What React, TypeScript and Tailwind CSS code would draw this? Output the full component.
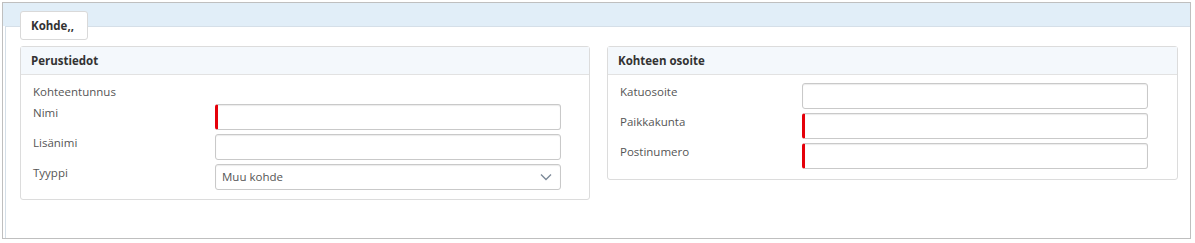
import React from 'react';

const font = { fontFamily: '"Open Sans", "Liberation Sans", sans-serif' };

const inputBase =
  'h-[26px] w-[346px] rounded-[3px] border border-[#c9c9c9] bg-white shadow-[inset_0_1px_1px_rgba(0,0,0,0.08)]';

const Field: React.FC<{ required?: boolean }> = ({ required }) => (
  <div className={`${inputBase} ${required ? 'border-l-[3px] border-l-[#e5000a]' : ''}`} />
);

const SelectField: React.FC<{ value: string }> = ({ value }) => (
  <div className={`${inputBase} flex items-center justify-between pl-[6px] pr-[8px]`}>
    <span className="text-[11.5px] text-[#555]">{value}</span>
    <svg width="12" height="8" viewBox="0 0 12 8" fill="none">
      <path d="M1 1.5L6 6.5L11 1.5" stroke="#7d8a99" strokeWidth="1.4" />
    </svg>
  </div>
);

const Row: React.FC<{ label: string; children: React.ReactNode }> = ({ label, children }) => (
  <div className="flex items-start">
    <div className="w-[182px] pt-[1px] text-[11.5px] leading-[16px] text-[#555]">{label}</div>
    {children}
  </div>
);

const Panel: React.FC<{ title: string; width: string; children: React.ReactNode }> = ({
  title,
  width,
  children,
}) => (
  <div className={`${width} rounded-[3px] border border-[#dcdcdc] bg-white`}>
    <div className="flex h-[28px] items-center border-b border-[#e2e2e2] bg-[#f4f8fc] px-[10px] text-[11.5px] font-bold text-[#333]">
      {title}
    </div>
    {children}
  </div>
);

export default function App() {
  return (
    <div className="h-[243px] w-[1195px] bg-white pl-[2px] pt-[2px]" style={font}>
      <div className="flex h-[237px] w-[1189px] flex-col border border-[#bfbfbf]">
        <div className="h-[23px] bg-[#e1eef8]" />
        <div className="ml-[2px] flex-1 border-l border-t border-[#d5dfe8] bg-white">
          <div className="relative z-10 -mt-[16px] ml-[14px] flex h-[29px] w-[68px] items-center rounded-[3px] border border-[#d9d9d9] bg-white px-[10px] text-[11.5px] font-bold text-[#333]">
            Kohde,,
          </div>

          <div className="ml-[14px] mt-[6px] flex items-start gap-[17px]">
            <Panel title="Perustiedot" width="w-[570px]">
              <div className="pb-[9px] pl-[12px] pt-[9px]">
                <div className="text-[11.5px] leading-[16px] text-[#555]">Kohteentunnus</div>
                <div className="mt-[4px] flex flex-col gap-[4px]">
                  <Row label="Nimi">
                    <Field required />
                  </Row>
                  <Row label="Lisänimi">
                    <Field />
                  </Row>
                  <Row label="Tyyppi">
                    <SelectField value="Muu kohde" />
                  </Row>
                </div>
              </div>
            </Panel>

            <Panel title="Kohteen osoite" width="w-[571px]">
              <div className="flex flex-col gap-[4px] pb-[10px] pl-[12px] pt-[8px]">
                <Row label="Katuosoite">
                  <Field />
                </Row>
                <Row label="Paikkakunta">
                  <Field required />
                </Row>
                <Row label="Postinumero">
                  <Field required />
                </Row>
              </div>
            </Panel>
          </div>
        </div>
      </div>
    </div>
  );
}
